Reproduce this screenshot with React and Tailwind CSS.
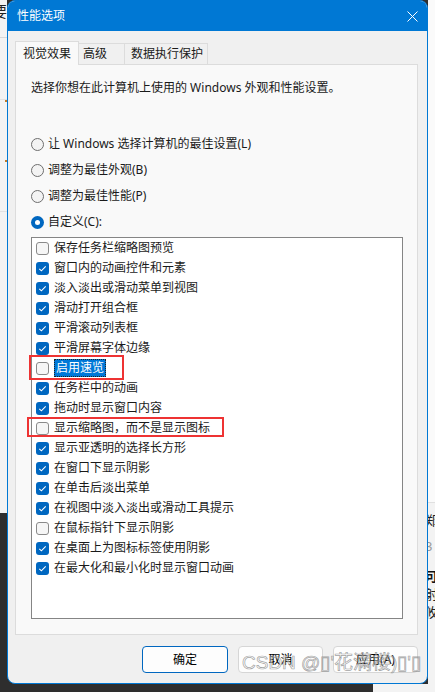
import React from 'react';

const FONT = "[font-family:'Noto_Sans','Noto_Sans_CJK_SC',sans-serif]";

const items = [
  ['保存任务栏缩略图预览', false],
  ['窗口内的动画控件和元素', true],
  ['淡入淡出或滑动菜单到视图', true],
  ['滑动打开组合框', true],
  ['平滑滚动列表框', true],
  ['平滑屏幕字体边缘', true],
  ['启用速览', false],
  ['任务栏中的动画', true],
  ['拖动时显示窗口内容', true],
  ['显示缩略图，而不是显示图标', false],
  ['显示亚透明的选择长方形', true],
  ['在窗口下显示阴影', true],
  ['在单击后淡出菜单', true],
  ['在视图中淡入淡出或滑动工具提示', true],
  ['在鼠标指针下显示阴影', false],
  ['在桌面上为图标标签使用阴影', true],
  ['在最大化和最小化时显示窗口动画', true],
];

const radios = ['让 Windows 选择计算机的最佳设置(L)', '调整为最佳外观(B)', '调整为最佳性能(P)', '自定义(C):'];

function Check({ on }) {
  if (!on) {
    return <span className="w-[13px] h-[13px] rounded-[3px] border border-[#8a8a8a] bg-[#f6f6f6] shrink-0" />;
  }
  return (
    <span className="w-[13px] h-[13px] rounded-[3px] bg-[#0067c0] shrink-0 flex items-center justify-center">
      <svg width="13" height="13" viewBox="0 0 13 13">
        <path d="M3.3 6.8 L5.4 8.8 L9.7 4.4" fill="none" stroke="#fff" strokeWidth="1.1" />
      </svg>
    </span>
  );
}

function Radio({ on }) {
  if (on) {
    return (
      <span className="w-[13px] h-[13px] rounded-full bg-[#0067c0] shrink-0 flex items-center justify-center">
        <span className="w-[5px] h-[5px] rounded-full bg-white" />
      </span>
    );
  }
  return <span className="w-[13px] h-[13px] rounded-full border border-[#6e6e6e] bg-[#f3f3f3] shrink-0" />;
}

export default function App() {
  return (
    <div className={`w-[435px] h-[692px] flex overflow-hidden bg-[#f3f3f3] text-[12px] text-[#1a1a1a] ${FONT}`}>
      {/* left backdrop */}
      <div className="w-[7px] shrink-0 flex flex-col overflow-hidden">
        <div className="h-[513px] bg-[#f3f3f3] flex flex-col">
          <div className="h-[38px] border-b border-[#d8d8d8] overflow-hidden">
            <span className="block -ml-[8px] mt-[2px] text-[15px] leading-[18px] text-[#222]">要</span>
          </div>
          <div className="h-[62px] border-b border-[#e2e2e2]" />
          <div className="h-[2px] w-[2px] ml-[5px] bg-[#c07a2a]" />
          <div className="h-[58px]" />
          <div className="h-[2px] w-[2px] ml-[5px] bg-[#c07a2a]" />
          <div className="h-[50px] border-b border-[#e2e2e2]" />
        </div>
        <div className="flex-1 bg-[#2e2e2e]" />
      </div>

      {/* middle column */}
      <div className="w-[421px] shrink-0 flex flex-col bg-[#2e2e2e]">
        <div className="relative h-[684px] bg-[#f0f0f0] border border-[#0078d4] rounded-[8px] overflow-hidden flex flex-col">
          {/* title bar */}
          <div className="h-[30px] bg-[#0078d4] flex items-center justify-between pl-[9px] pr-[9px]">
            <span className="text-white text-[12px] leading-[16px]">性能选项</span>
            <svg width="11" height="11" viewBox="0 0 11 11">
              <path d="M0.5 0.5 L10.5 10.5 M10.5 0.5 L0.5 10.5" stroke="#fff" strokeWidth="1" />
            </svg>
          </div>

          <div className="pt-[10px] pl-[7px] pr-[9px] flex flex-col">
            {/* tabs */}
            <div className="flex items-end h-[23px]">
              <div className="relative z-10 w-[64px] h-[24px] -mb-px bg-[#f9f9f9] border border-b-0 border-[#dcdcdc] pl-[7px] flex items-center leading-[16px]">
                视觉效果
              </div>
              <div className="-ml-px w-[47px] h-[21px] bg-[#f0f0f0] border border-b-0 border-[#dcdcdc] pl-[4px] flex items-center leading-[16px]">
                高级
              </div>
              <div className="-ml-px w-[84px] h-[21px] bg-[#f0f0f0] border border-b-0 border-[#dcdcdc] pl-[6px] flex items-center leading-[16px]">
                数据执行保护
              </div>
            </div>

            {/* panel */}
            <div className="h-[571px] bg-[#f9f9f9] border border-[#dcdcdc] pl-[15px] pr-[14px] pt-[13px] flex flex-col">
              <div className="h-[20px] leading-[20px]">选择你想在此计算机上使用的 Windows 外观和性能设置。</div>

              <div className="mt-[33px] flex flex-col">
                {radios.map((r, i) => (
                  <div key={r} className="h-[26px] flex items-center gap-[4px]">
                    <Radio on={i === 3} />
                    <span className="leading-[20px]">{r}</span>
                  </div>
                ))}
              </div>

              <div className="mt-[2px] h-[382px] bg-white border border-[#858585] flex flex-col pl-[4px]">
                {items.map(([label, on], i) => (
                  <div key={label} className="relative h-[20px] flex items-center gap-[5px]">
                    <Check on={on} />
                    {i === 6 ? (
                      <span className="bg-[#0078d7] text-white border border-dotted border-[#222] px-[1px] leading-[16px]">
                        {label}
                      </span>
                    ) : (
                      <span className="leading-[20px]">{label}</span>
                    )}
                    {i === 6 && (
                      <span className="absolute left-[-7px] top-[-3px] w-[95px] h-[25px] border-2 border-[#ee3333] pointer-events-none" />
                    )}
                    {i === 9 && (
                      <span className="absolute left-[-9px] top-[-1px] w-[197px] h-[20px] border-2 border-[#ee3333] pointer-events-none" />
                    )}
                  </div>
                ))}
              </div>
            </div>

            {/* buttons */}
            <div className="mt-[11px] flex justify-end gap-[10px]">
              <button className="w-[86px] h-[27px] bg-[#fdfdfd] border border-[#0067c0] rounded-[4px] text-[12px] leading-[16px] text-black">
                确定
              </button>
              <button className="w-[85px] h-[27px] bg-[#fdfdfd] border border-[#d6d6d6] rounded-[4px] text-[12px] leading-[16px] text-black">
                取消
              </button>
              <button className="w-[85px] h-[27px] bg-[#fdfdfd] border border-[#d6d6d6] rounded-[4px] text-[12px] leading-[16px] text-black">
                应用(A)
              </button>
            </div>
          </div>

          {/* watermark */}
          <span className="absolute left-[234px] top-[650px] text-[19px] leading-[24px] whitespace-nowrap text-[rgba(255,255,255,0.4)] [-webkit-text-stroke:0.7px_rgba(120,120,120,0.7)] [font-family:'Liberation_Sans','Noto_Sans_CJK_SC',sans-serif]">
            CSDN @▯'花满楼)▯'▯
          </span>
        </div>
        <div className="flex-1 flex">
          <div className="w-[366px] bg-[#2e2e2e]" />
          <div className="flex-1 bg-[#f3f3f3]" />
        </div>
      </div>

      {/* right backdrop */}
      <div className="w-[7px] shrink-0 flex flex-col overflow-hidden bg-[#f3f3f3]">
        <div className="h-[503px] bg-[#fafafa] border-b border-[#e0e0e0]" />
        <div className="flex flex-col text-[13px] leading-[18px] -ml-[3px]">
          <span className="mt-[8px] text-[#222]">郑</span>
          <span className="mt-[8px] text-[#999]">3</span>
          <span className="mt-[12px] font-bold text-[#111]">可</span>
          <span className="text-[#222]">射</span>
          <span className="text-[#222]">攸</span>
        </div>
      </div>
    </div>
  );
}
